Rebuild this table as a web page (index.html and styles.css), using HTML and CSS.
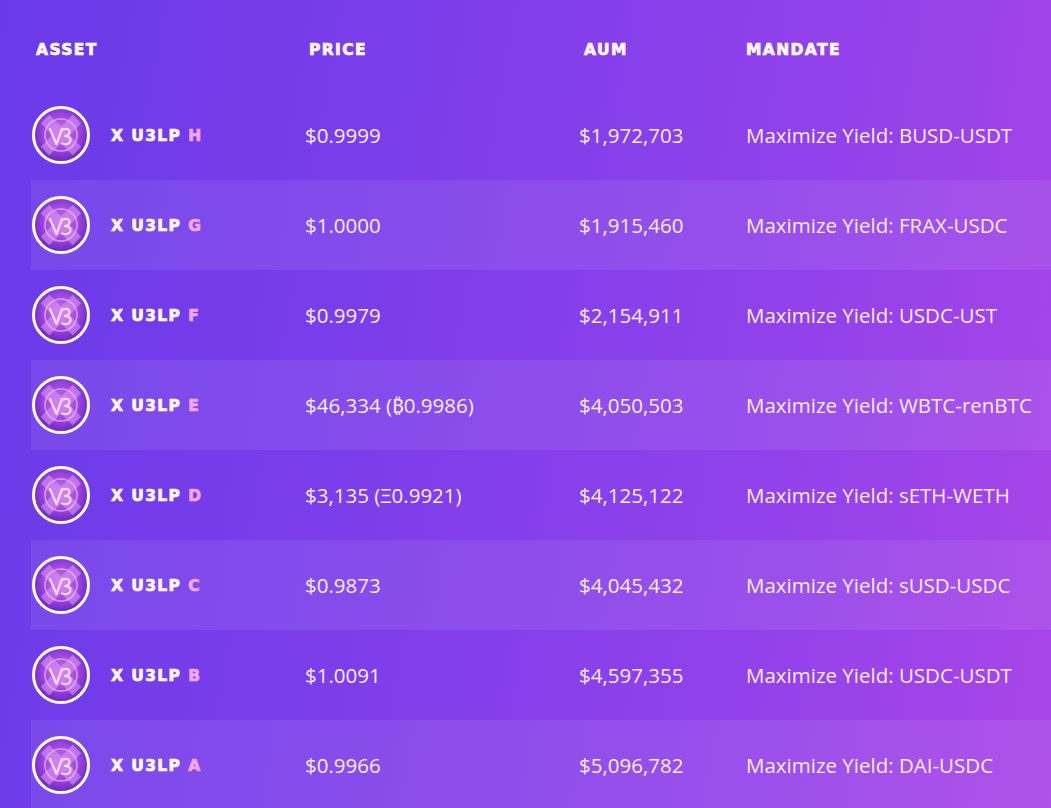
FILE: index.html
```html
<!DOCTYPE html>
<html>
<head>
<meta charset="utf-8">
<link rel="stylesheet" href="styles.css">
</head>
<body>
<svg width="0" height="0" class="defs">
  <defs>
    <radialGradient id="coin" cx="50%" cy="45%" r="55%">
      <stop offset="0" stop-color="#c173ee"/>
      <stop offset="0.6" stop-color="#9a45df"/>
      <stop offset="1" stop-color="#6a22c0"/>
    </radialGradient>
    <symbol id="u3" viewBox="0 0 60 60">
      <circle cx="30" cy="30" r="27.5" fill="url(#coin)" stroke="#fff" stroke-width="3"/>
      <path d="M14 14 L46 46 M46 14 L14 46" stroke="#da95f3" stroke-width="12" stroke-linecap="butt" opacity="0.6"/>
      <circle cx="30" cy="30" r="16" fill="none" stroke="#f0b4f5" stroke-width="1.6" opacity="0.75"/>
      <path d="M19 24 L25.5 39 L31 24" fill="none" stroke="#ffd6f7" stroke-width="2.2" stroke-linejoin="round" stroke-linecap="round"/>
      <path d="M31 25 Q38 22 38.5 27 Q38.5 30.5 34 31 Q40 31.5 39.5 35.5 Q38.5 40.5 31 38.5" fill="none" stroke="#ffd6f7" stroke-width="2.2" stroke-linecap="round" stroke-linejoin="round"/>
    </symbol>
  </defs>
</svg>
<div class="table">
  <div class="row head">
    <div class="hcell h-asset">ASSET</div>
    <div class="hcell h-price">PRICE</div>
    <div class="hcell h-aum">AUM</div>
    <div class="hcell h-mandate">MANDATE</div>
  </div>

  <div class="row">
    <div class="asset"><svg class="icon"><use href="#u3"/></svg><span class="name">X U3LP <b>H</b></span></div>
    <div class="cell">$0.9999</div>
    <div class="cell">$1,972,703</div>
    <div class="cell">Maximize Yield: BUSD-USDT</div>
  </div>
  <div class="row alt">
    <div class="asset"><svg class="icon"><use href="#u3"/></svg><span class="name">X U3LP <b>G</b></span></div>
    <div class="cell">$1.0000</div>
    <div class="cell">$1,915,460</div>
    <div class="cell">Maximize Yield: FRAX-USDC</div>
  </div>
  <div class="row">
    <div class="asset"><svg class="icon"><use href="#u3"/></svg><span class="name">X U3LP <b>F</b></span></div>
    <div class="cell">$0.9979</div>
    <div class="cell">$2,154,911</div>
    <div class="cell">Maximize Yield: USDC-UST</div>
  </div>
  <div class="row alt">
    <div class="asset"><svg class="icon"><use href="#u3"/></svg><span class="name">X U3LP <b>E</b></span></div>
    <div class="cell">$46,334 (₿0.9986)</div>
    <div class="cell">$4,050,503</div>
    <div class="cell">Maximize Yield: WBTC-renBTC</div>
  </div>
  <div class="row">
    <div class="asset"><svg class="icon"><use href="#u3"/></svg><span class="name">X U3LP <b>D</b></span></div>
    <div class="cell">$3,135 (Ξ0.9921)</div>
    <div class="cell">$4,125,122</div>
    <div class="cell">Maximize Yield: sETH-WETH</div>
  </div>
  <div class="row alt">
    <div class="asset"><svg class="icon"><use href="#u3"/></svg><span class="name">X U3LP <b>C</b></span></div>
    <div class="cell">$0.9873</div>
    <div class="cell">$4,045,432</div>
    <div class="cell">Maximize Yield: sUSD-USDC</div>
  </div>
  <div class="row">
    <div class="asset"><svg class="icon"><use href="#u3"/></svg><span class="name">X U3LP <b>B</b></span></div>
    <div class="cell">$1.0091</div>
    <div class="cell">$4,597,355</div>
    <div class="cell">Maximize Yield: USDC-USDT</div>
  </div>
  <div class="row alt">
    <div class="asset"><svg class="icon"><use href="#u3"/></svg><span class="name">X U3LP <b>A</b></span></div>
    <div class="cell">$0.9966</div>
    <div class="cell">$5,096,782</div>
    <div class="cell">Maximize Yield: DAI-USDC</div>
  </div>
</div>
</body>
</html>
```

FILE: styles.css
```css
html, body {
  margin: 0;
  padding: 0;
  height: 100%;
  overflow: hidden;
}
body {
  background: linear-gradient(100deg, #6a3ae9 0%, #7e3eea 40%, #9442ea 75%, #a946e8 100%);
  color: #f6ebff;
  font-family: "Open Sans", "Noto Sans", sans-serif;
}
.defs {
  position: absolute;
  width: 0;
  height: 0;
}
.table {
  padding-left: 31px;
}
.row {
  display: grid;
  grid-template-columns: 274px 274px 167px 1fr;
  height: 90px;
  align-items: center;
}
.row.alt {
  background: rgba(255, 255, 255, 0.075);
}
.row.head {
  padding-top: 10px;
  height: 80px;
}
.hcell, .name {
  font-family: "DejaVu Sans", sans-serif;
  font-weight: bold;
  font-size: 15.5px;
  letter-spacing: 1.4px;
  -webkit-text-stroke: 0.7px currentColor;
  color: #fff8ff;
}
.name {
  padding-top: 2px;
}
.h-asset { padding-left: 5px; }
.h-price { padding-left: 4px; }
.h-aum { padding-left: 5px; }
.h-mandate { padding-left: 0; }
.asset {
  display: flex;
  align-items: center;
  gap: 20px;
}
.icon {
  width: 60px;
  height: 60px;
  display: block;
}
.name b {
  color: #f2a9f2;
}
.cell {
  font-size: 20.5px;
  white-space: nowrap;
}
```
